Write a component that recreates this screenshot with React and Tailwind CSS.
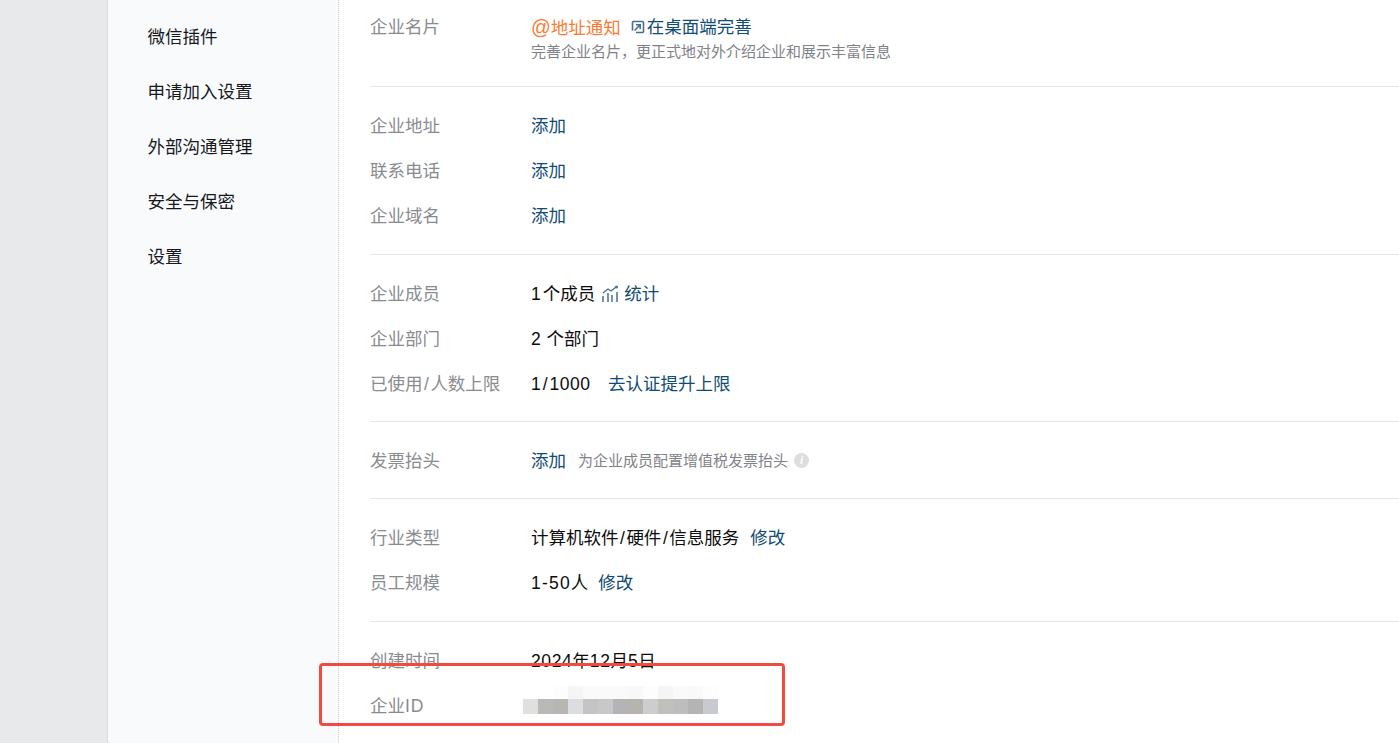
const nav = ["微信插件", "申请加入设置", "外部沟通管理", "安全与保密", "设置"];

const top = ["#ffffff", "#ffffff", "#fdfdfd", "#f5f5f5", "#fafafa", "#fafafa", "#fafafa", "#f8f8f8", "#fdfdfd", "#f5f5f5", "#fafafa", "#f9f9f9", "#fdfdfd"];
const bottom = ["#e0e0df", "#b9b9b8", "#b7b6b2", "#dcdde0", "#c4c4c4", "#c7c8c7", "#b5b3b8", "#b5b4ae", "#cdcdd0", "#c0c0bd", "#bdbdc0", "#b4b4b3", "#c9cacf"];

function Row({ label, children }) {
  return (
    <div className="flex h-[45px] items-center">
      <div className="w-[161px] shrink-0 text-[#888b90]">{label}</div>
      <div className="flex items-center whitespace-nowrap text-[#0c0c0c]">{children}</div>
    </div>
  );
}

const Link = ({ children, className = "" }) => <span className={`text-[#0f4c75] ${className}`}>{children}</span>;
const Slash = () => <span className="px-[1.5px]">/</span>;
const Num = ({ children }) => <span className="tracking-[0.6px]">{children}</span>;

function Mosaic() {
  return (
    <div className="ml-[-8px] mt-[-12px] flex flex-col">
      <div className="flex">
        {top.map((c, i) => (
          <div key={i} className="h-[13px] w-[15px]" style={{ background: c }} />
        ))}
      </div>
      <div className="flex">
        {bottom.map((c, i) => (
          <div key={i} className="h-[15px] w-[15px]" style={{ background: c }} />
        ))}
      </div>
    </div>
  );
}

export default function App() {
  return (
    <div
      className="relative flex h-[743px] w-[1399px] overflow-hidden bg-[#e8e9eb] text-[17.5px] leading-[24px]"
      style={{ fontFamily: '"Liberation Sans", "Noto Sans CJK SC", sans-serif' }}
    >
      <div className="ml-[108px] flex w-[231px] shrink-0 flex-col rounded-bl-[3px] border-r border-dotted border-r-[#cfd2d6] bg-[#f9fafc] pl-[39.5px] pt-[9px] text-[#16181c] shadow-[-1px_0_1px_#dcdde0]">
        {nav.map((n) => (
          <div key={n} className="flex h-[55px] shrink-0 items-center">{n}</div>
        ))}
      </div>

      <div className="flex min-w-0 flex-1 flex-col bg-white pl-[31px]">
        <div className="h-[87px] shrink-0 border-b border-[#e8e8e8] pt-[15px]">
          <div className="flex">
            <div className="w-[161px] shrink-0 text-[#888b90]">企业名片</div>
            <div>
              <div className="flex h-[24px] items-center whitespace-nowrap">
                <span className="text-[#fb7a33]"><span className="text-[19.5px]">@</span>地址通知</span>
                <svg className="ml-[10px] mr-[2px] h-[14px] w-[14px] shrink-0" viewBox="0 0 14 14" fill="none" stroke="#4a6f94" strokeWidth="1.6">
                  <path d="M1.5 10.5V2.5a1 1 0 0 1 1-1h9a1 1 0 0 1 1 1v9a1 1 0 0 1-1 1H5" />
                  <path d="M5 4.8h4.2V9M9 5 3.5 10.5" />
                </svg>
                <Link>在桌面端完善</Link>
              </div>
              <div className="mt-[1px] whitespace-nowrap text-[15px] leading-[24px] text-[#7f8288]">完善企业名片，更正式地对外介绍企业和展示丰富信息</div>
            </div>
          </div>
        </div>

        <div className="shrink-0 border-b border-[#e8e8e8] pb-[16px] pt-[16px]">
          <Row label="企业地址"><Link>添加</Link></Row>
          <Row label="联系电话"><Link>添加</Link></Row>
          <Row label="企业域名"><Link>添加</Link></Row>
        </div>

        <div className="shrink-0 border-b border-[#e8e8e8] pb-[15px] pt-[16px]">
          <Row label="企业成员">
            <span><span className="tracking-[2px]">1</span>个成员</span>
            <svg className="ml-[6px] mr-[5px] h-[18px] w-[18px] shrink-0" viewBox="0 0 18 18" fill="none" stroke="#4a6f94">
              <path d="M2 11v6M7 8v9M11 10v7M16 7v10" strokeWidth="1.5" />
              <path d="M2 8l5-4 3 2 5-4" strokeWidth="1.3" />
              <circle cx="15.5" cy="2" r="1.5" fill="#4a6f94" stroke="none" />
            </svg>
            <Link>统计</Link>
          </Row>
          <Row label="企业部门"><span><span className="tracking-[0.5px]">2 </span>个部门</span></Row>
          <Row label={<span>已使用<Slash />人数上限</span>}>
            <span className="tracking-[0.5px]">1<Slash />1000</span>
            <Link className="ml-[17.5px]">去认证提升上限</Link>
          </Row>
        </div>

        <div className="shrink-0 border-b border-[#e8e8e8] pb-[15px] pt-[16px]">
          <Row label="发票抬头">
            <Link>添加</Link>
            <span className="ml-[12px] text-[15px] text-[#7f8288]">为企业成员配置增值税发票抬头</span>
            <span className="ml-[6px] flex h-[15px] w-[15px] items-center justify-center rounded-full bg-[#dedede] text-[11px] font-bold italic leading-none text-white">i</span>
          </Row>
        </div>

        <div className="shrink-0 border-b border-[#e8e8e8] pb-[16px] pt-[16px]">
          <Row label="行业类型">
            <span>计算机软件<Slash />硬件<Slash />信息服务</span>
            <Link className="ml-[11px]">修改</Link>
          </Row>
          <Row label="员工规模">
            <span><span className="tracking-[1.2px]">1-50</span>人</span>
            <Link className="ml-[10px]">修改</Link>
          </Row>
        </div>

        <div className="shrink-0 pt-[16px]">
          <Row label="创建时间"><span><Num>2024</Num>年<Num>12</Num>月<Num>5</Num>日</span></Row>
          <Row label={<span>企业<span className="tracking-[0.8px]">ID</span></span>}><Mosaic /></Row>
        </div>
      </div>

      <div className="absolute left-[319px] top-[663px] h-[63px] w-[466px] rounded-[4px] border-[3px] border-[#f04b3e]" />
    </div>
  );
}
